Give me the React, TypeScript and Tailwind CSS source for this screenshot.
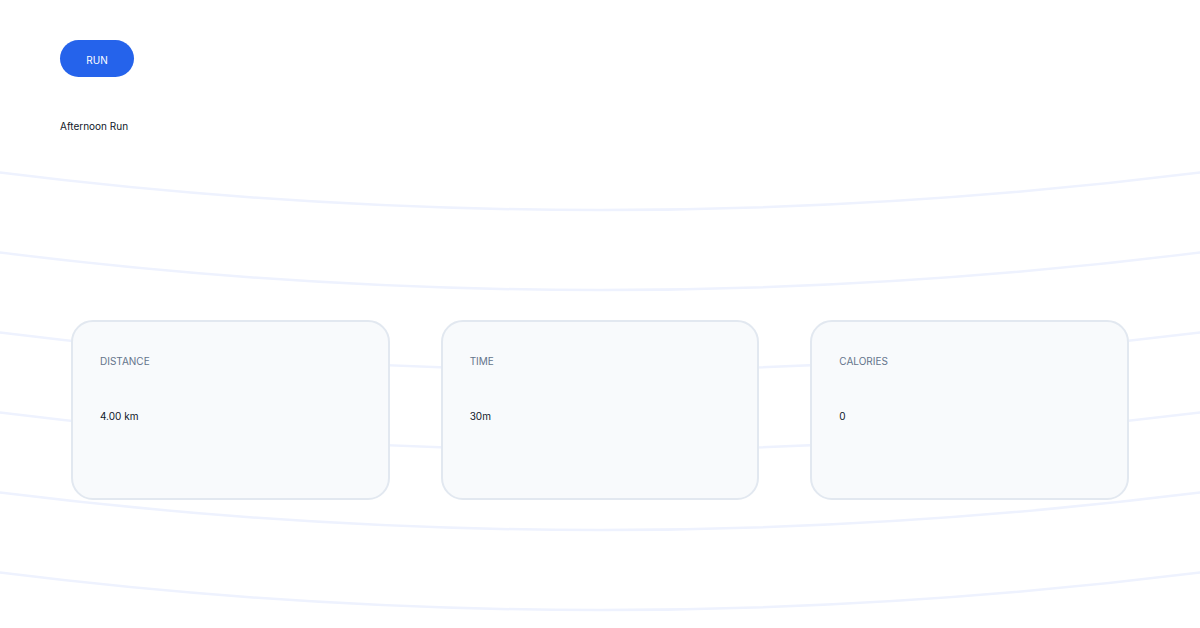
import React from "react";

interface Stat {
  label: string;
  value: string;
}

const stats: Stat[] = [
  { label: "Distance", value: "4.00 km" },
  { label: "Time", value: "30m" },
  { label: "Calories", value: "0" },
];

// faint track lanes behind the content
function Lanes() {
  const offsets = [0, 80, 160, 240, 320, 400];
  return (
    <svg className="absolute inset-0 w-full h-full" viewBox="0 0 1200 628" preserveAspectRatio="none">
      {offsets.map((o) => (
        <path
          key={o}
          d={`M -20 ${170 + o} Q 600 ${250 + o} 1220 ${170 + o}`}
          fill="none"
          stroke="#eef2fe"
          strokeWidth="2.5"
        />
      ))}
    </svg>
  );
}

export default function App() {
  return (
    <div className="relative w-[1200px] h-[628px] bg-white overflow-hidden font-['Inter',sans-serif]">
      <Lanes />
      <div className="relative flex flex-col px-[60px] pt-[40px]">
        <div className="w-[74px] h-[37px] pt-[3px] rounded-full bg-[#2563eb] text-white text-[10px] flex items-center justify-center">
          RUN
        </div>
        <h1 className="mt-[41px] text-[10px] leading-[16px] text-[#0f172a]">Afternoon Run</h1>

        <div className="mt-[186px] mx-[11px] grid grid-cols-3 gap-[51px]">
          {stats.map((s) => (
            <div
              key={s.label}
              className="h-[180px] rounded-[22px] border-2 border-[#e2e8f0] bg-[#f8fafc] px-[27px] pt-[31px]"
            >
              <div className="text-[10px] leading-[16px] uppercase text-[#64748b]">{s.label}</div>
              <div className="mt-[39px] text-[10px] leading-[16px] text-[#0f172a]">{s.value}</div>
            </div>
          ))}
        </div>
      </div>
    </div>
  );
}
